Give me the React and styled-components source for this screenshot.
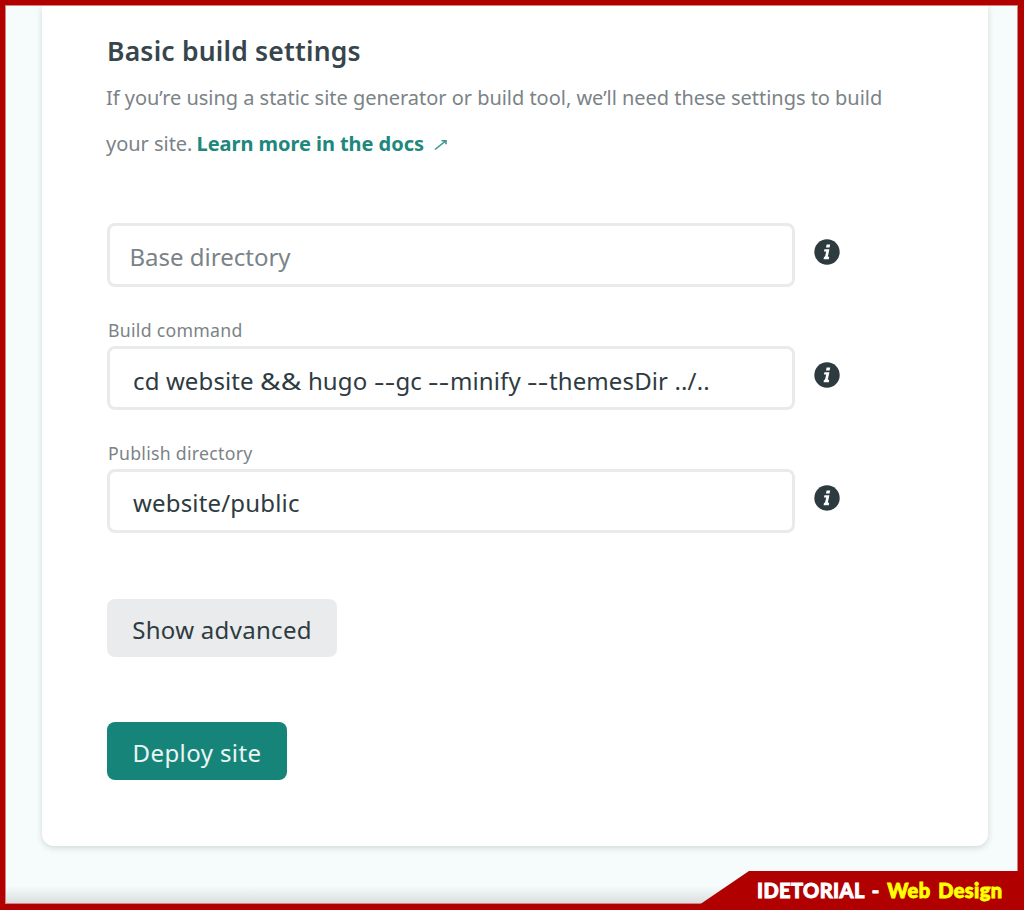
import React from "react";
import styled, { createGlobalStyle } from "styled-components";

const GlobalStyle = createGlobalStyle`
  *, *::before, *::after { box-sizing: border-box; }
  body { margin: 0; background: #b00000; }
  input, button { font: inherit; letter-spacing: inherit; }
`;

const Frame = styled.div`
  position: relative;
  width: 1024px;
  height: 910px;
  overflow: hidden;
  padding: 5px 6px 6px 5px;
  background: #b00000;
  font-family: "Noto Sans", "Open Sans", sans-serif;
  color: #2e3b41;
`;

const Page = styled.main`
  height: 899px;
  overflow: hidden;
  padding: 0 30px 0 36px;
  border: 1px solid #d98080;
  background: linear-gradient(to bottom, #f6fcfc 880px, #d6dada 899px);
`;

const Card = styled.section`
  width: 946px;
  height: 840px;
  padding: 26px 64px 0 65px;
  border-radius: 0 0 12px 12px;
  background: #fff;
  box-shadow: 0 2px 6px rgba(14, 30, 37, 0.16);
`;

const Title = styled.h2`
  margin: 0;
  font-size: 26.5px;
  line-height: 38px;
  font-weight: 600;
  letter-spacing: 0.2px;
  color: #37454c;
`;

const Intro = styled.p`
  margin: 5px 0 0 -1px;
  font-size: 20px;
  line-height: 46px;
  letter-spacing: -0.03px;
  color: #7b8387;
  white-space: nowrap;
`;

const DocsLink = styled.a`
  margin-left: -1px;
  color: #20877d;
  font-weight: 700;
  letter-spacing: -0.05px;

  svg { margin-left: 10px; }
`;

const Fields = styled.div`
  display: flex;
  flex-direction: column;
  margin-top: 56px;
`;

const Field = styled.div`
  display: grid;
  grid-template-columns: 688px 26px;
  column-gap: 19px;
  margin-bottom: ${(p) => p.$gap || "0"};
`;

const Label = styled.label`
  grid-column: 1 / -1;
  padding-left: 1px;
  font-size: 17.7px;
  line-height: 25px;
  height: 28px;
  letter-spacing: 0.27px;
  color: #7b8387;
`;

const Input = styled.input`
  width: 688px;
  height: 64px;
  padding: 3px 20px 0 ${(p) => p.$indent || "23px"};
  border: 3px solid #e9ebeb;
  border-radius: 8px;
  outline: none;
  background: #fff;
  color: #2e3b41;
  font-size: 24px;
  letter-spacing: ${(p) => p.$tracking};

  &::placeholder { color: #7b8387; opacity: 1; }
`;

const CommandBox = styled(Input).attrs({ as: "div" })`
  display: flex;
  align-items: center;
  padding-top: 4px;
  white-space: pre;
`;

const Wide = styled.span`
  display: inline-block;
  margin-right: 6px;
  transform: scaleX(${(p) => p.$scale});
  transform-origin: left;
`;

const InfoIcon = styled.svg`
  display: block;
  width: 26px;
  height: 26px;
  margin-top: 16px;
`;

const Button = styled.button`
  display: block;
  width: ${(p) => p.$width};
  height: 58px;
  margin-top: ${(p) => p.$top};
  padding: 3px 0 0;
  border: 0;
  border-radius: 8px;
  background: ${(p) => (p.$primary ? "#17847a" : "#e9ebec")};
  color: ${(p) => (p.$primary ? "#e9f6f4" : "#2e3b41")};
  font-size: 24px;
  letter-spacing: ${(p) => p.$tracking};
`;

const Banner = styled.footer`
  position: absolute;
  right: 0;
  bottom: 0;
  width: 325px;
  height: 39px;
  padding: 0 0 0 58px;
  background: #b00000;
  clip-path: polygon(50px 0, 100% 0, 100% 100%, 0 100%, 0 34px);
  color: #fff;
  font: 900 20px/39px Lato, sans-serif;
  word-spacing: 2.5px;
  white-space: nowrap;
`;

const BannerPart = styled.span`
  color: ${(p) => p.$color};
  -webkit-text-stroke: 0.9px ${(p) => p.$color};
  letter-spacing: ${(p) => p.$tracking};
`;

function Info() {
  return (
    <InfoIcon viewBox="0 0 26 26" aria-label="Info">
      <circle cx="13" cy="13" r="12.7" fill="#2d3b41" />
      <path
        d="M12.6 5.500h3.600l-.6 3.100h-3.600zM10.400 10.200h5l-1.600 7.600h1.400l-.4 2.400H9.600l.4-2.400h1l1.200-5.200h-2.200z"
        fill="#fff"
      />
    </InfoIcon>
  );
}

export default function App() {
  return (
    <>
      <GlobalStyle />
      <Frame>
        <Page>
          <Card>
            <Title>Basic build settings</Title>
            <Intro>
              If you’re using a static site generator or build tool, we’ll need these settings to build
              <br />
              your site.{" "}
              <DocsLink>
                Learn more in the docs
                <svg width="13" height="12" viewBox="0 0 13 12" fill="none" stroke="#3a968d" strokeWidth="1.6">
                  <path d="M1 10.500 11 2.500M7.500 1.800h4.500v3.500" />
                </svg>
              </DocsLink>
            </Intro>
            <Fields>
              <Field $gap="31px">
                <Input placeholder="Base directory" $indent="19.5px" $tracking="0px" />
                <Info />
              </Field>
              <Field $gap="31px">
                <Label>Build command</Label>
                <CommandBox $tracking="0.12px">
                  <span>
                    {"cd website "}
                    <Wide $scale={1.17}>&amp;&amp;</Wide>
                    {" hugo "}
                    <Wide $scale={1.36}>--</Wide>
                    {"gc "}
                    <Wide $scale={1.36}>--</Wide>
                    {"minify "}
                    <Wide $scale={1.36}>--</Wide>
                    {"themesDir ../.."}
                  </span>
                </CommandBox>
                <Info />
              </Field>
              <Field>
                <Label>Publish directory</Label>
                <Input defaultValue="website/public" $tracking="0.17px" />
                <Info />
              </Field>
            </Fields>
            <Button $width="230px" $top="66px" $tracking="0.3px">Show advanced</Button>
            <Button $primary $width="180px" $top="65px" $tracking="0.4px">Deploy site</Button>
          </Card>
        </Page>
        <Banner>
          <BannerPart $color="#fff" $tracking="0.4px">IDETORIAL - </BannerPart>
          <BannerPart $color="#ff0" $tracking="0.4px">Web Design</BannerPart>
        </Banner>
      </Frame>
    </>
  );
}
